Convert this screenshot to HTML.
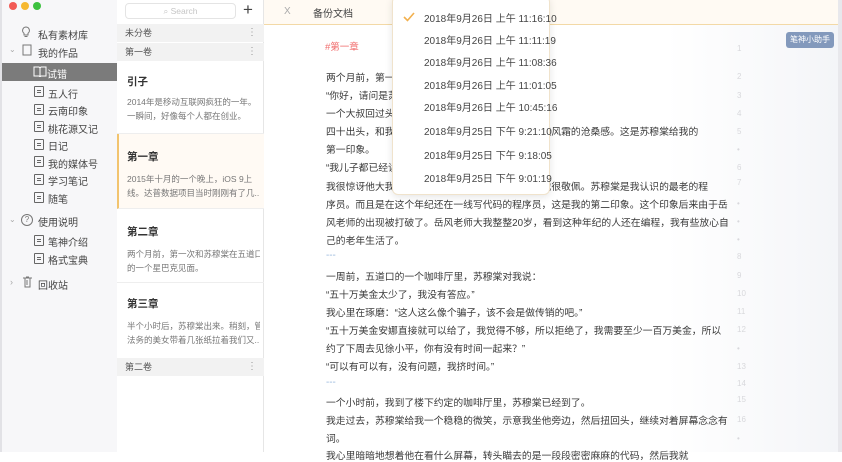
<!DOCTYPE html>
<html><head><meta charset="utf-8">
<style>
*{margin:0;padding:0;box-sizing:border-box}
body{width:842px;height:452px;overflow:hidden;background:#fff;font-family:"Liberation Sans","Noto Sans CJK SC",sans-serif;position:relative;color:#333}
.abs{position:absolute}
#side{left:0;top:0;width:117px;height:452px;background:#f7f7f9;border-left:2px solid #e2e2e6}
.dot{position:absolute;top:2px;width:8px;height:8px;border-radius:50%}
.si{position:absolute;font-size:10px;color:#444;white-space:nowrap}
.doc{position:absolute;width:10px;height:11px;border:1px solid #666;border-radius:1px}
.doc:after{content:"";position:absolute;left:2px;top:3px;width:4px;height:1px;background:#666;box-shadow:0 2px 0 #666}
#list{left:117px;top:0;width:147px;height:452px;background:#fff;border-right:1px solid #e6e6e6}
.vh{position:absolute;left:0;width:147px;height:18px;background:#f2f2f2;font-size:9px;color:#555;padding-left:8px;line-height:18px}
.vh b{position:absolute;right:7px;top:0;font-weight:normal;color:#999;font-size:10px;letter-spacing:0}
.card{position:absolute;left:0;width:147px;border-bottom:1px solid #eee}
.card h4{font-size:10.5px;color:#333;font-weight:bold;margin:0 0 0 10px}
.card p{font-size:8.5px;color:#777;line-height:14px;margin:6px 4px 0 10px;white-space:nowrap;overflow:hidden}
#top{left:264px;top:0;width:574px;height:25px;background:#fffaf3;border-bottom:1px solid #f3d9a6}
#main{left:264px;top:25px;width:574px;height:427px;background:linear-gradient(90deg,#fff 0,#fff 70%,#f4f5f8 100%)}
.ln{position:absolute;left:326px;font-size:9.8px;color:#3a3a3a;white-space:nowrap}
.num{position:absolute;left:737px;font-size:8px;color:#d8d8dc}
#dd{left:392px;top:-4px;width:158px;height:199px;background:#fff;border:1px solid #f0e3cc;border-radius:6px;box-shadow:0 2px 8px rgba(0,0,0,.1)}
.di{position:absolute;left:31px;font-size:10px;color:#444;white-space:nowrap}
</style></head><body>
<div id="side" class="abs">
 <div class="dot" style="left:7px;background:#f25a55"></div>
 <div class="dot" style="left:19px;background:#f6b830"></div>
 <div class="dot" style="left:31px;background:#3cc13f"></div>
 <svg class="abs" style="left:19px;top:26px" width="10" height="12" viewBox="0 0 10 12"><path d="M5 1a3.5 3.5 0 0 0-2 6.3V9h4V7.3A3.5 3.5 0 0 0 5 1zM3.5 10.5h3" fill="none" stroke="#777" stroke-width="1"/></svg>
 <div class="si" style="left:36px;top:27px">私有素材库</div>
 <div class="si" style="left:7px;top:45px;color:#aaa;font-size:8px">⌄</div>
 <svg class="abs" style="left:20px;top:44px" width="10" height="12"><rect x="1" y="1" width="8" height="10" fill="none" stroke="#777"/></svg>
 <div class="si" style="left:36px;top:45px">我的作品</div>
 <div class="abs" style="left:0;top:63px;width:117px;height:18px;background:#7b7b7b"></div>
 <svg class="abs" style="left:31px;top:66px" width="14" height="11"><path d="M1 1h5l1 1 1-1h5v9H8l-1 1-1-1H1z M7 2v8" fill="none" stroke="#fff"/></svg>
 <div class="si" style="left:45px;top:66px;color:#fff">试错</div>
 <div class="doc" style="left:32px;top:86px"></div><div class="si" style="left:46px;top:86px">五人行</div>
 <div class="doc" style="left:32px;top:104px"></div><div class="si" style="left:46px;top:103px">云南印象</div>
 <div class="doc" style="left:32px;top:121px"></div><div class="si" style="left:46px;top:121px">桃花源又记</div>
 <div class="doc" style="left:32px;top:139px"></div><div class="si" style="left:46px;top:138px">日记</div>
 <div class="doc" style="left:32px;top:156px"></div><div class="si" style="left:46px;top:156px">我的媒体号</div>
 <div class="doc" style="left:32px;top:174px"></div><div class="si" style="left:46px;top:173px">学习笔记</div>
 <div class="doc" style="left:32px;top:192px"></div><div class="si" style="left:46px;top:191px">随笔</div>
 <div class="si" style="left:7px;top:215px;color:#aaa;font-size:8px">⌄</div>
 <div class="abs" style="left:19px;top:214px;width:12px;height:12px;border:1px solid #777;border-radius:50%;font-size:8px;text-align:center;line-height:10px;color:#777">?</div>
 <div class="si" style="left:36px;top:214px">使用说明</div>
 <div class="doc" style="left:32px;top:235px"></div><div class="si" style="left:46px;top:234px">笔神介绍</div>
 <div class="doc" style="left:32px;top:253px"></div><div class="si" style="left:46px;top:252px">格式宝典</div>
 <div class="si" style="left:8px;top:277px;color:#aaa;font-size:9px">›</div>
 <svg class="abs" style="left:20px;top:276px" width="11" height="12"><path d="M1 2h9M3 2v9h5V2M4 1h3M5 4v5" fill="none" stroke="#777"/></svg>
 <div class="si" style="left:36px;top:277px">回收站</div>
</div>
<div id="list" class="abs">
 <div class="abs" style="left:8px;top:3px;width:111px;height:16px;border:1px solid #e4e4e4;border-radius:4px;font-size:8.5px;color:#c5c5c5;text-align:center;line-height:14px">⌕ Search</div>
 <div class="abs" style="left:126px;top:0;font-size:17px;color:#444">+</div>
 <div class="vh" style="top:24px">未分卷<b>⋮</b></div>
 <div class="vh" style="top:43px">第一卷<b>⋮</b></div>
 <div class="card" style="top:62px;height:72px"><h4 style="margin-top:12px">引子</h4><p>2014年是移动互联网疯狂的一年。<br>一瞬间，好像每个人都在创业。</p></div>
 <div class="card" style="top:134px;height:75px;background:#fffaf4;border-left:2px solid #f2c46f"><h4 style="margin-top:15px;margin-left:8px">第一章</h4><p style="margin-left:8px;margin-top:8px">2015年十月的一个晚上，iOS 9上<br>线。达普数据项目当时刚刚有了几...</p></div>
 <div class="card" style="top:209px;height:74px"><h4 style="margin-top:15px">第二章</h4><p style="margin-top:8px">两个月前，第一次和苏穆棠在五道口<br>的一个星巴克见面。</p></div>
 <div class="card" style="top:283px;height:75px;border:none"><h4 style="margin-top:13px">第三章</h4><p style="margin-top:8px">半个小时后，苏穆棠出来。稍刻，管<br>法务的美女带着几张纸拉着我们又...</p></div>
 <div class="vh" style="top:358px">第二卷<b>⋮</b></div>
</div>
<div id="top" class="abs">
 <div class="abs" style="left:20px;top:6px;font-size:10px;color:#aaa">X</div>
 <div class="abs" style="left:49px;top:5px;font-size:10px;color:#444">备份文档</div>
</div>
<div id="main" class="abs"></div>
<div class="abs" style="left:838px;top:0;width:4px;height:452px;background:#e8e8ec"></div>
<div class="abs" style="left:786px;top:32px;width:48px;height:16px;background:#8399bc;border-radius:3px;color:#fff;font-size:8px;text-align:center;line-height:16px">笔神小助手</div>
<div class="abs" style="left:325px;top:39px;font-size:9.5px;color:#f06a6a">#第一章</div>
<div class="ln" style="top:70px">两个月前，第一次和苏穆棠</div>
<div class="ln" style="top:88px">“你好，请问是苏穆棠先生吗？”</div>
<div class="ln" style="top:106px">一个大叔回过头，笑眯眯</div>
<div class="ln" style="top:124px">四十出头，和我差不多高，一脸和蔼，带着一种饱经风霜的沧桑感。这是苏穆棠给我的</div>
<div class="ln" style="top:142px">第一印象。</div>
<div class="ln" style="top:160px">“我儿子都已经读大学了。”</div>
<div class="ln" style="top:179px">我很惊讶他大我一轮多，却还在一线写代码，这让我很敬佩。苏穆棠是我认识的最老的程</div>
<div class="ln" style="top:197px">序员。而且是在这个年纪还在一线写代码的程序员，这是我的第二印象。这个印象后来由于岳</div>
<div class="ln" style="top:215px">风老师的出现被打破了。岳风老师大我整整20岁，看到这种年纪的人还在编程，我有些放心自</div>
<div class="ln" style="top:233px">己的老年生活了。</div>
<div class="ln" style="top:250px;color:#9ab8dd">---</div>
<div class="ln" style="top:269px">一周前，五道口的一个咖啡厅里，苏穆棠对我说：</div>
<div class="ln" style="top:287px">“五十万美金太少了，我没有答应。”</div>
<div class="ln" style="top:305px">我心里在琢磨：“这人这么像个骗子，该不会是做传销的吧。”</div>
<div class="ln" style="top:323px">“五十万美金安娜直接就可以给了，我觉得不够，所以拒绝了，我需要至少一百万美金，所以</div>
<div class="ln" style="top:341px">约了下周去见徐小平，你有没有时间一起来？”</div>
<div class="ln" style="top:359px">“可以有可以有，没有问题，我挤时间。”</div>
<div class="ln" style="top:377px;color:#9ab8dd">---</div>
<div class="ln" style="top:395px">一个小时前，我到了楼下约定的咖啡厅里，苏穆棠已经到了。</div>
<div class="ln" style="top:413px">我走过去，苏穆棠给我一个稳稳的微笑，示意我坐他旁边，然后扭回头，继续对着屏幕念念有</div>
<div class="ln" style="top:431px">词。</div>
<div class="ln" style="top:448px">我心里暗暗地想着他在看什么屏幕，转头瞄去的是一段段密密麻麻的代码，然后我就</div>
<div class="num" style="top:44px">1</div><div class="num" style="top:72px">2</div><div class="num" style="top:91px">3</div><div class="num" style="top:109px">4</div><div class="num" style="top:127px">5</div><div class="num" style="top:145px">•</div><div class="num" style="top:163px">6</div><div class="num" style="top:178px">7</div><div class="num" style="top:199px">•</div><div class="num" style="top:217px">•</div><div class="num" style="top:235px">•</div><div class="num" style="top:252px">8</div><div class="num" style="top:271px">9</div><div class="num" style="top:289px">10</div><div class="num" style="top:307px">11</div><div class="num" style="top:325px">12</div><div class="num" style="top:344px">•</div><div class="num" style="top:362px">13</div><div class="num" style="top:379px">14</div><div class="num" style="top:395px">15</div><div class="num" style="top:415px">16</div><div class="num" style="top:434px">•</div>
<div id="dd" class="abs">
 <svg class="abs" style="left:10px;top:15px" width="12" height="10"><path d="M1 5l3.5 3.5L11 1" fill="none" stroke="#f2b04e" stroke-width="1.6"/></svg>
 <div class="di" style="top:13px">2018年9月26日 上午 11:16:10</div>
 <div class="di" style="top:35px">2018年9月26日 上午 11:11:19</div>
 <div class="di" style="top:57px">2018年9月26日 上午 11:08:36</div>
 <div class="di" style="top:80px">2018年9月26日 上午 11:01:05</div>
 <div class="di" style="top:102px">2018年9月26日 上午 10:45:16</div>
 <div class="di" style="top:126px">2018年9月25日 下午 9:21:10</div>
 <div class="di" style="top:150px">2018年9月25日 下午 9:18:05</div>
 <div class="di" style="top:173px">2018年9月25日 下午 9:01:19</div>
</div>
</body></html>
